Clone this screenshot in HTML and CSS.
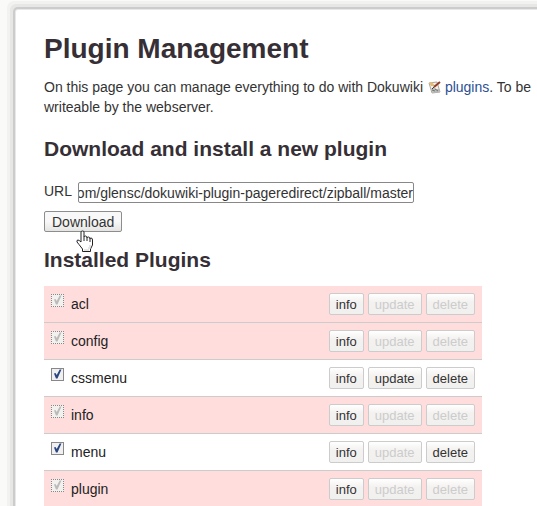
FILE: index.html
```html
<!DOCTYPE html>
<html lang="en">
<head>
<meta charset="utf-8">
<title>Plugin Management</title>
<link rel="stylesheet" href="styles.css">
</head>
<body>
<main class="page">
  <h1>Plugin Management</h1>
  <p class="intro">On this page you can manage everything to do with Dokuwiki <a href="#plugins"><svg class="wiki-icon" viewBox="0 0 13 13" aria-hidden="true"><path d="M1 2 9 1 12 11 4 12Z" fill="#f4f0e6" stroke="#aaa69c"/><path d="M1 2 4 1 7 5 3 5Z" fill="#e2bd78"/><path d="M3 8 6 6 8 8 11 8 12 11 5 12Z" fill="#b9bbb8"/><path d="M4 9 7 10M7 8 10 10" stroke="#6f7778"/><path d="M12 1 6 6" stroke="#933b26" stroke-width="2"/><path d="M6 6 4 8" stroke="#403b38"/></svg>plugins</a>. To be<br>writeable by the webserver.</p>

  <h2>Download and install a new plugin</h2>
  <form class="install">
    <div class="field">
      <label for="url">URL</label>
      <input id="url" class="url" type="text" dir="rtl" value="https://github.com/glensc/dokuwiki-plugin-pageredirect/zipball/master">
    </div>
    <button class="download" type="button">Download<svg class="pointer" viewBox="0 0 17 22" aria-hidden="true"><path d="M5 12V2Q5 1 6.500 1Q8 1 8 2V7Q8 6 9.500 6Q11 6 11 8Q11 7 12.500 7Q14 7 14 9Q14 8 15 8Q16.500 8 16.500 10V15L14.500 19V21.500H6.500V19L3 14.500L1 12Q.5 10 2 10Q3 10 5 12Z" fill="#fff" stroke="#222"/><path d="M8 7V11M11 8V11M14 9V12" fill="none" stroke="#222"/><path d="M8 20H13M12 18H15M13 16H15" stroke="#ccc"/></svg></button>
  </form>

  <h2>Installed Plugins</h2>
  <table class="plugins">
    <tbody>
      <tr class="protected"><td class="name"><div><input id="acl" type="checkbox" checked disabled><label for="acl">acl</label></div></td><td class="actions"><div><button type="button">info</button><button type="button" disabled>update</button><button type="button" disabled>delete</button></div></td></tr>
      <tr class="protected"><td class="name"><div><input id="config" type="checkbox" checked disabled><label for="config">config</label></div></td><td class="actions"><div><button type="button">info</button><button type="button" disabled>update</button><button type="button" disabled>delete</button></div></td></tr>
      <tr><td class="name"><div><input id="cssmenu" type="checkbox" checked><label for="cssmenu">cssmenu</label></div></td><td class="actions"><div><button type="button">info</button><button type="button">update</button><button type="button">delete</button></div></td></tr>
      <tr class="protected"><td class="name"><div><input id="info" type="checkbox" checked disabled><label for="info">info</label></div></td><td class="actions"><div><button type="button">info</button><button type="button" disabled>update</button><button type="button" disabled>delete</button></div></td></tr>
      <tr><td class="name"><div><input id="menu" type="checkbox" checked><label for="menu">menu</label></div></td><td class="actions"><div><button type="button">info</button><button type="button" disabled>update</button><button type="button">delete</button></div></td></tr>
      <tr class="protected"><td class="name"><div><input id="plugin" type="checkbox" checked disabled><label for="plugin">plugin</label></div></td><td class="actions"><div><button type="button">info</button><button type="button" disabled>update</button><button type="button" disabled>delete</button></div></td></tr>
    </tbody>
  </table>
</main>
</body>
</html>
```

FILE: styles.css
```css
* { box-sizing: border-box; }

html { overflow: hidden; }

body {
  margin: 0;
  padding: 10px 0 0 16px;
  background: #fafaf9;
  color: #333;
  font: 14px/20px "Liberation Sans", Arial, sans-serif;
}

.page {
  min-height: 100vh;
  margin-right: -10px;
  padding: 22px 0 0 28px;
  background: #fff;
  border-radius: 2px;
  box-shadow: 0 0 0 1px #e8e8e8, 0 0 0 3px #ccc, 0 0 0 6px #e7e7e5, 0 0 0 9px #f2f2f0;
}

h1, h2 { margin: 0; color: #362f36; font-weight: bold; }
h1 { font-size: 28px; line-height: 34px; }
h2 { font-size: 21px; line-height: 26px; }

.intro { margin: 11px 0 19px; white-space: nowrap; }
.intro a { color: #2b4f94; text-decoration: none; }

.wiki-icon {
  width: 13px;
  height: 13px;
  margin: 0 4px 0 1px;
  vertical-align: -2px;
  fill: none;
}

.install { margin: 20px 0 15px; }
.field { display: flex; gap: 6px; margin-bottom: 8px; }
.field label { line-height: 19px; }

.url {
  width: 336px;
  height: 21px;
  padding: 1px 0 0;
  border: 1px solid #888;
  border-radius: 2px;
  background: #fff;
  color: #333;
  font: inherit;
}

.download {
  position: relative;
  display: block;
  height: 21px;
  padding: 1px 7px 0;
  border: 1px solid #8d8d8d;
  border-radius: 2px;
  background: linear-gradient(#f8f8f8 50%, #e4e4e2);
  color: #333;
  font: inherit;
  line-height: 18px;
}

.pointer {
  position: absolute;
  top: 18px;
  left: 31px;
  width: 17px;
  height: 22px;
}

.plugins {
  width: 438px;
  margin-top: 13px;
  border-spacing: 0;
}

.plugins .protected { background: #fdd; }
.plugins td { height: 37px; padding: 0 7px; border-bottom: 1px solid #ccc; }

.name div { display: flex; align-items: center; gap: 7px; color: #222; }

.name input {
  appearance: none;
  width: 13px;
  height: 13px;
  margin: 0 0 8px;
  border: 1px solid #888;
  background: #f0f0f0;
}

.name input::before {
  content: "";
  display: block;
  width: 11px;
  height: 11px;
  background: #294582;
  clip-path: polygon(18% 45%, 32% 40%, 43% 60%, 70% 9%, 86% 9%, 50% 91%, 36% 91%);
}

.name input:disabled { border: 1px dotted #888; background: #f3f1ed; }
.name input:disabled::before { background: #bbb; }

.actions div { display: flex; justify-content: flex-end; gap: 4px; }

.actions button {
  height: 22px;
  padding: 1px 6px 0;
  border: 1px solid #ccc;
  border-radius: 2px;
  background: linear-gradient(#fff, #f4f2f0 40%, #f0f0ee);
  color: #333;
  font: 13px/18px "Liberation Sans", Arial, sans-serif;
}

.actions button:disabled { color: #ccc; }
```
